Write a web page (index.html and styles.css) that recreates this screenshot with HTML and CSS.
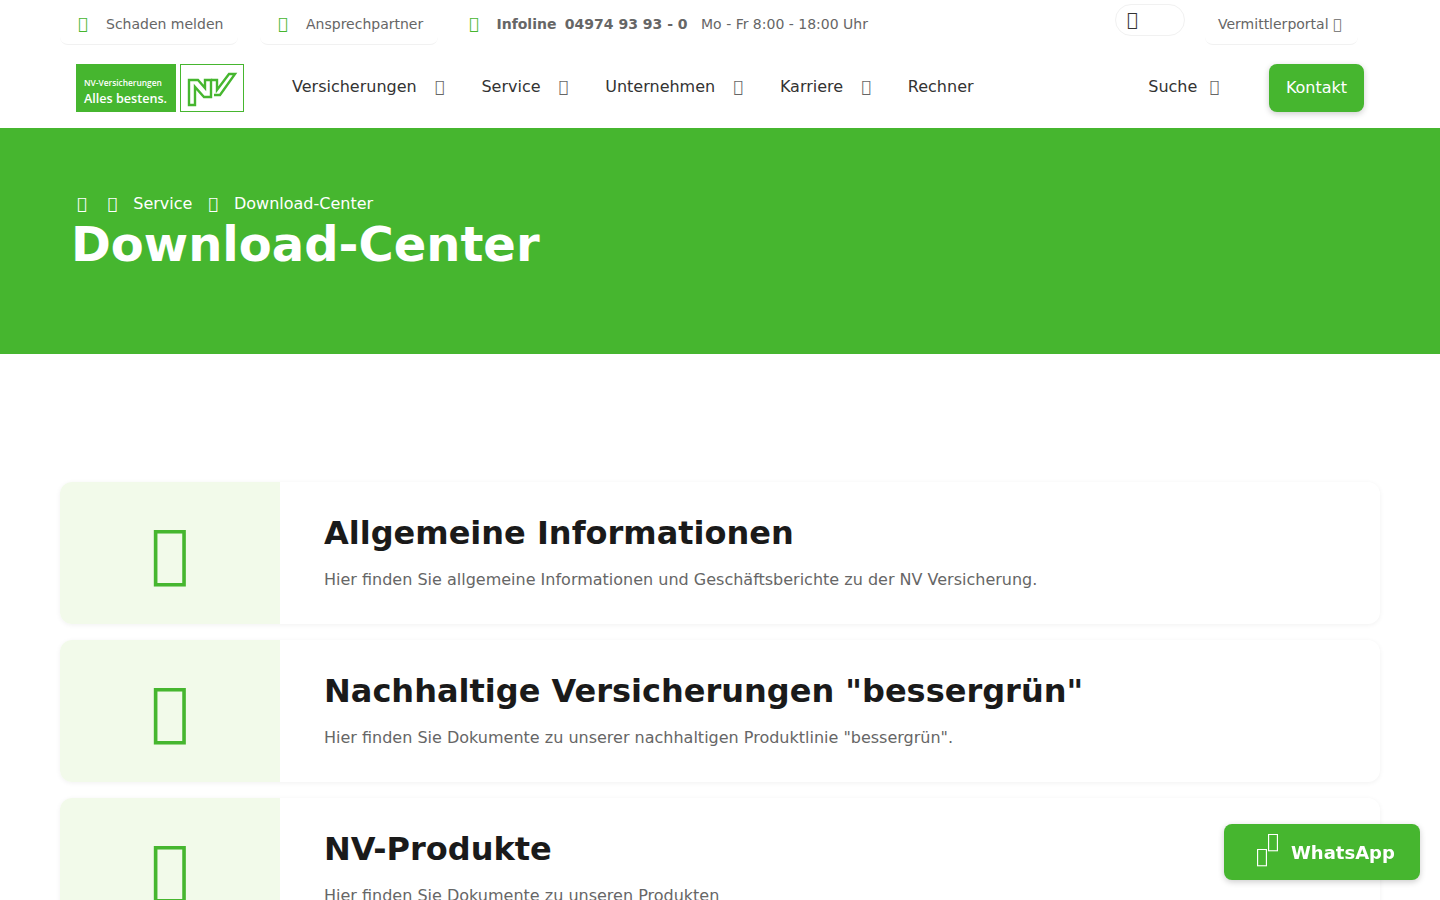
FILE: index.html
```html
<!DOCTYPE html>
<html lang="de">
<head>
    <meta charset="UTF-8">
    <meta name="viewport" content="width=device-width, initial-scale=1.0">
    <title>Download-Center</title>
    <link rel="stylesheet" href="styles.css">
</head>
<body>
    <div class="topbar">
        <div class="topbar-left">
            <a href="#" class="top-link"><span class="icon icon-green">&#xf071;</span>Schaden melden</a>
            <a href="#" class="top-link"><span class="icon icon-green">&#xf007;</span>Ansprechpartner</a>
            <div class="infoline">
                <span class="icon icon-green">&#xf095;</span>
                <b class="infoline-label">Infoline</b>
                <b class="infoline-number">04974 93 93 - 0</b>
                <span>Mo - Fr 8:00 - 18:00 Uhr</span>
            </div>
        </div>
        <div class="topbar-right">
            <div class="lang-toggle"><span class="icon">&#xf186;</span></div>
            <a href="#" class="portal-link">Vermittlerportal <span class="icon">&#xf023;</span></a>
        </div>
    </div>

    <header class="navbar">
        <a href="#" class="logo">
            <div class="logo-claim">
                <span class="logo-small">NV-Versicherungen</span>
                <span class="logo-big">Alles bestens.</span>
            </div>
            <div class="logo-mark">
                <svg class="logo-nv" width="50" height="34" viewBox="0 0 50 34">
                    <path d="M2 8H11L18 16V8H24V25H17L8 15V33H2Z" fill="none" stroke="#46b62f" stroke-width="2.4"/>
                    <path d="M24 8H30V18L42 2H48L33 23H27" fill="none" stroke="#46b62f" stroke-width="2.4"/>
                </svg>
            </div>
        </a>
        <nav class="main-nav">
            <a href="#">Versicherungen <span class="icon">&#xf107;</span></a>
            <a href="#">Service <span class="icon">&#xf107;</span></a>
            <a href="#">Unternehmen <span class="icon">&#xf107;</span></a>
            <a href="#">Karriere <span class="icon">&#xf107;</span></a>
            <a href="#">Rechner</a>
        </nav>
        <a href="#" class="search-link">Suche <span class="icon">&#xf107;</span></a>
        <a href="#" class="contact-btn">Kontakt</a>
    </header>

    <section class="hero">
        <div class="breadcrumb">
            <span class="icon breadcrumb-home">&#xf015;</span>
            <span class="icon">&#xf105;</span>
            <a href="#">Service</a>
            <span class="icon">&#xf105;</span>
            <a href="#">Download-Center</a>
        </div>
        <h1>Download-Center</h1>
    </section>

    <main class="cards">
        <a href="#" class="card">
            <div class="card-icon"><span class="icon">&#xf05a;</span></div>
            <div class="card-body">
                <h2>Allgemeine Informationen</h2>
                <p>Hier finden Sie allgemeine Informationen und Geschäftsberichte zu der NV Versicherung.</p>
            </div>
        </a>
        <a href="#" class="card">
            <div class="card-icon"><span class="icon">&#xf06c;</span></div>
            <div class="card-body">
                <h2>Nachhaltige Versicherungen "bessergrün"</h2>
                <p>Hier finden Sie Dokumente zu unserer nachhaltigen Produktlinie "bessergrün".</p>
            </div>
        </a>
        <a href="#" class="card">
            <div class="card-icon"><span class="icon">&#xf15c;</span></div>
            <div class="card-body">
                <h2>NV-Produkte</h2>
                <p>Hier finden Sie Dokumente zu unseren Produkten</p>
            </div>
        </a>
    </main>

    <a href="#" class="whatsapp-btn">
        <span class="whatsapp-icon">
            <span class="icon">&#xf232;</span>
            <span class="icon">&#xf232;</span>
        </span>
        WhatsApp
    </a>
</body>
</html>
```
FILE: styles.css
```css
* {
    margin: 0;
    padding: 0;
    box-sizing: border-box;
}

body {
    font-family: "DejaVu Sans", sans-serif;
    background-color: #fff;
    color: #333;
}

a {
    color: inherit;
    text-decoration: none;
}

.icon-green {
    color: #46b62f;
    font-size: 16px;
}

/* top bar */
.topbar {
    height: 48px;
    padding: 0 60px 0 60px;
    display: flex;
    justify-content: space-between;
    font-size: 14px;
    color: #666;
}

.topbar-left {
    display: flex;
}

.top-link {
    width: 178px;
    height: 45px;
    margin-right: 22px;
    padding: 15px 0 0 18px;
    line-height: 17px;
    border-bottom: 1px solid #f1f1f1;
    border-radius: 0 0 8px 8px;
}

.top-link .icon {
    display: inline-block;
    width: 28px;
}

.infoline {
    padding: 15px 0 0 9px;
    line-height: 17px;
}

.infoline .icon {
    display: inline-block;
    width: 23px;
}

.infoline-label {
    margin-right: 4px;
}

.infoline-number {
    margin-right: 9px;
}

.topbar-right {
    display: flex;
    align-items: flex-start;
}

.lang-toggle {
    width: 70px;
    height: 32px;
    margin-top: 4px;
    margin-right: 20px;
    padding-left: 11px;
    border: 1px solid #f1f1f1;
    border-radius: 16px;
    font-size: 18px;
    line-height: 30px;
    color: #333;
}

.portal-link {
    width: 153px;
    height: 45px;
    margin-right: 22px;
    padding: 16px 0 0 13px;
    line-height: 17px;
    border-bottom: 1px solid #f1f1f1;
    border-radius: 0 0 8px 8px;
}

/* main nav */
.navbar {
    height: 80px;
    padding: 16px 76px 16px 76px;
    display: flex;
    align-items: flex-start;
}

.logo {
    display: flex;
    gap: 4px;
    height: 48px;
}

.logo-claim {
    width: 100px;
    height: 48px;
    padding: 11px 0 0 8px;
    background-color: #46b62f;
    color: #fff;
    font-family: "Open Sans", sans-serif;
    font-weight: 600;
}

.logo-small {
    display: block;
    font-size: 8.4px;
    line-height: 16px;
}

.logo-big {
    display: block;
    font-size: 12.6px;
    line-height: 15px;
    white-space: nowrap;
}

.logo-mark {
    width: 64px;
    height: 48px;
    padding: 7px 6px;
    border: 1px solid #46b62f;
}

.logo-nv {
    display: block;
    overflow: visible;
}

.main-nav {
    display: flex;
    margin-left: 48px;
    gap: 37px;
    line-height: 46px;
    font-size: 16px;
}

.main-nav .icon {
    margin-left: 13px;
    color: #666;
}

.search-link {
    margin-left: auto;
    margin-right: 50px;
    font-size: 16px;
    line-height: 46px;
}

.search-link .icon {
    margin-left: 7px;
    color: #666;
}

.contact-btn {
    width: 95px;
    height: 48px;
    background-color: #46b62f;
    color: #fff;
    font-size: 16px;
    line-height: 48px;
    text-align: center;
    border-radius: 8px;
    box-shadow: 0 2px 6px rgba(0, 0, 0, 0.2);
}

/* hero */
.hero {
    height: 226px;
    padding: 65px 71px 0 71px;
    background-color: #46b62f;
    color: #fff;
}

.breadcrumb {
    display: flex;
    gap: 16px;
    padding-left: 6px;
    font-size: 16px;
    line-height: 22px;
}

.breadcrumb-home {
    margin-right: 5px;
}

.hero h1 {
    font-size: 48px;
    line-height: 58px;
    font-weight: 700;
}

/* cards */
.cards {
    padding: 128px 60px 60px 60px;
    display: flex;
    flex-direction: column;
    gap: 16px;
}

.card {
    display: flex;
    height: 142px;
    background-color: #fff;
    border-radius: 12px;
    overflow: hidden;
    box-shadow: 0 1px 5px rgba(0, 0, 0, 0.06);
}

.card-icon {
    width: 220px;
    background-color: #f2faea;
    color: #46b62f;
    font-size: 64px;
    display: flex;
    align-items: center;
    justify-content: center;
}

.card-body {
    padding: 30px 44px 0 44px;
}

.card-body h2 {
    font-size: 32px;
    line-height: 42px;
    color: #1a1a1a;
    margin-bottom: 14px;
}

.card-body p {
    font-size: 16px;
    line-height: 24px;
    color: #666;
}

/* whatsapp button */
.whatsapp-btn {
    position: fixed;
    right: 20px;
    bottom: 20px;
    width: 196px;
    height: 56px;
    display: flex;
    align-items: center;
    padding-left: 32px;
    background-color: #46b62f;
    color: #fff;
    font-size: 18px;
    font-weight: 700;
    border-radius: 8px;
    box-shadow: 0 2px 6px rgba(0, 0, 0, 0.2);
}

.whatsapp-icon {
    width: 20px;
    margin-right: 15px;
    margin-bottom: 7px;
    font-size: 20px;
    font-weight: 400;
    display: flex;
    align-items: flex-start;
    line-height: 20px;
}

.whatsapp-icon .icon:first-child {
    margin-top: 15px;
}

.whatsapp-icon .icon:last-child {
    margin-left: -1px;
}
```
